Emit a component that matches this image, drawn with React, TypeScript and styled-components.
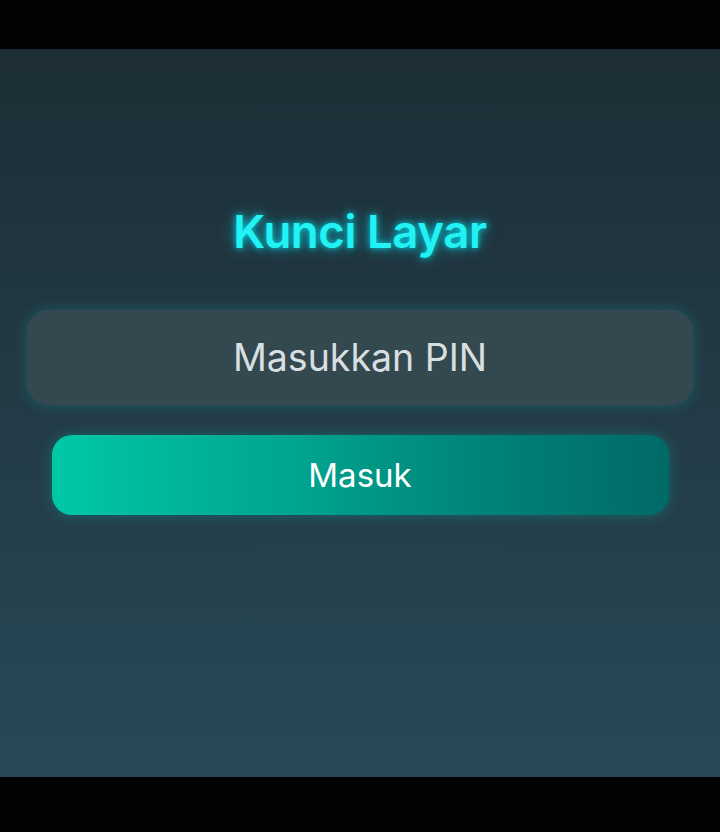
import React from "react";
import styled, { createGlobalStyle } from "styled-components";

const Global = createGlobalStyle`
  html, body { margin: 0; padding: 0; background: #000; }
  body { font-family: Inter, "Noto Sans", sans-serif; }
`;

const Frame = styled.div`
  width: 720px;
  height: 832px;
  display: flex;
  flex-direction: column;
  background: #000;
`;

const Bar = styled.div<{ $h: number }>`
  height: ${(p) => p.$h}px;
  flex: none;
  background: #020204;
`;

const Screen = styled.main`
  flex: 1;
  display: flex;
  flex-direction: column;
  align-items: center;
  padding: 154px 27px 0;
  background: linear-gradient(180deg, #1c2d35 0%, #223a44 45%, #284858 100%);
`;

const Title = styled.h1`
  margin: 0;
  height: 58px;
  line-height: 58px;
  font-size: 45.5px;
  font-weight: 600;
  letter-spacing: -0.4px;
  color: #22f2f4;
  text-shadow: 0 0 6px rgba(0, 240, 255, 0.8), 0 0 16px rgba(0, 230, 255, 0.55);
`;

const PinInput = styled.input`
  box-sizing: border-box;
  margin-top: 49px;
  width: 666px;
  height: 95px;
  border: none;
  outline: none;
  border-radius: 22px;
  background: #34494f;
  box-shadow: 0 0 14px rgba(0, 190, 190, 0.28);
  text-align: center;
  font-family: Inter, "Noto Sans", sans-serif;
  font-size: 37.5px;
  color: #e6ecee;
  &::placeholder {
    color: #d8dfe1;
  }
`;

const SubmitButton = styled.button`
  margin-top: 30px;
  width: 617px;
  height: 80px;
  border: none;
  border-radius: 20px;
  background: linear-gradient(90deg, #00c8a6 0%, #00a48e 40%, #008378 70%, #006a66 100%);
  box-shadow: 0 0 14px rgba(0, 200, 190, 0.3);
  font-family: Inter, "Noto Sans", sans-serif;
  font-size: 33px;
  font-weight: 400;
  color: #ffffff;
`;

export default function App() {
  return (
    <>
      <Global />
      <Frame>
        <Bar $h={49} />
        <Screen>
          <Title>Kunci Layar</Title>
          <PinInput placeholder="Masukkan PIN" type="password" />
          <SubmitButton>Masuk</SubmitButton>
        </Screen>
        <Bar $h={55} />
      </Frame>
    </>
  );
}
